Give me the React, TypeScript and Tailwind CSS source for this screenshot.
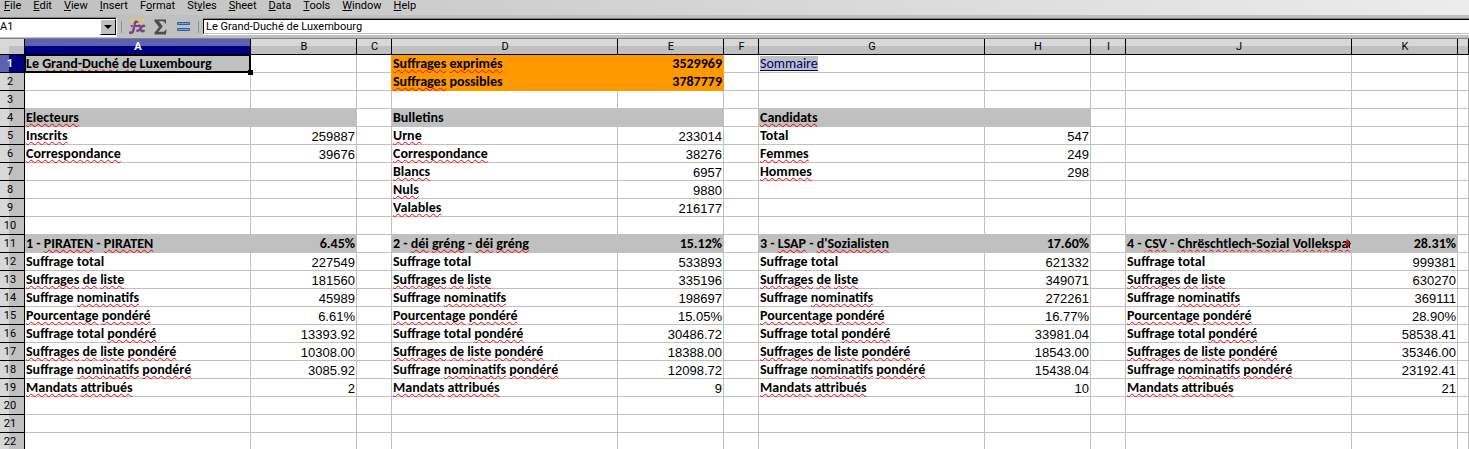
import type { ReactNode } from "react";

type Party = { name: string; share: string; values: string[] };

const COLUMNS = ["A", "B", "C", "D", "E", "F", "G", "H", "I", "J", "K", ""];
const ROW_COUNT = 22;

/* The letter between ampersands is the access key. */
const MENUS = ["&F&ile", "&E&dit", "&V&iew", "&I&nsert", "F&o&rmat", "St&y&les", "&S&heet", "&D&ata", "&T&ools", "&W&indow", "&H&elp"];

/* Words between underscores are marked by the spell checker. */
const LABELS = [
  "Suffrage total",
  "_Suffrages_ _de_ _liste_",
  "Suffrage _nominatifs_",
  "_Pourcentage_ _pondéré_",
  "Suffrage total _pondéré_",
  "_Suffrages_ _de_ _liste_ _pondéré_",
  "Suffrage _nominatifs_ _pondéré_",
  "_Mandats_ _attribués_",
];

const PARTIES: Record<string, Party> = {
  A: {
    name: "1 - _PIRATEN_ - _PIRATEN_",
    share: "6.45%",
    values: ["227549", "181560", "45989", "6.61%", "13393.92", "10308.00", "3085.92", "2"],
  },
  D: {
    name: "2 - _déi_ _gréng_ - _déi_ _gréng_",
    share: "15.12%",
    values: ["533893", "335196", "198697", "15.05%", "30486.72", "18388.00", "12098.72", "9"],
  },
  G: {
    name: "3 - _LSAP_ - _d'Sozialisten_",
    share: "17.60%",
    values: ["621332", "349071", "272261", "16.77%", "33981.04", "18543.00", "15438.04", "10"],
  },
  J: {
    name: "4 - _CSV_ - _Chrëschtlech-Sozial_ _Vollekspartei_",
    share: "28.31%",
    values: ["999381", "630270", "369111", "28.90%", "58538.41", "35346.00", "23192.41", "21"],
  },
};

const CELLS: Record<string, string> = {
  A1: "Le _Grand-Duché_ _de_ Luxembourg",
  D1: "_Suffrages_ _exprimés_",
  E1: "3529969",
  D2: "_Suffrages_ possibles",
  E2: "3787779",
  G1: "Sommaire",
  A4: "_Electeurs_",
  D4: "Bulletins",
  G4: "_Candidats_",
  A5: "_Inscrits_",
  B5: "259887",
  A6: "_Correspondance_",
  B6: "39676",
  D5: "_Urne_",
  E5: "233014",
  D6: "_Correspondance_",
  E6: "38276",
  D7: "_Blancs_",
  E7: "6957",
  D8: "_Nuls_",
  E8: "9880",
  D9: "_Valables_",
  E9: "216177",
  G5: "Total",
  H5: "547",
  G6: "_Femmes_",
  H6: "249",
  G7: "_Hommes_",
  H7: "298",
};

for (const [column, party] of Object.entries(PARTIES)) {
  const next = COLUMNS[COLUMNS.indexOf(column) + 1];
  CELLS[`${column}11`] = party.name;
  CELLS[`${next}11`] = party.share;
  LABELS.forEach((label, i) => {
    CELLS[`${column}${12 + i}`] = label;
    CELLS[`${next}${12 + i}`] = party.values[i];
  });
}

type Fill = "orange" | "gray" | "none";

function fillOf(column: string, row: number): Fill {
  if (column === "") return "none";
  if ("DE".includes(column) && row <= 2) return "orange";
  if (column === "A" && row === 1) return "gray";
  if (row === 4 && "ABDEGH".includes(column)) return "gray";
  if (row === 11 && "ABDEGHJK".includes(column)) return "gray";
  return "none";
}

function Marked({ text }: { text: string }) {
  return (
    <>
      {text.split("_").map((part, i): ReactNode =>
        i % 2 === 1 ? (
          <span
            key={i}
            className="underline decoration-[#ff0000] decoration-wavy decoration-1 underline-offset-1 [text-decoration-skip-ink:none]"
          >
            {part}
          </span>
        ) : (
          part
        ),
      )}
    </>
  );
}

function Cell({ column, row }: { column: string; row: number }) {
  const text = column ? CELLS[`${column}${row}`] : undefined;
  const fill = fillOf(column, row);
  const numeric = "BEHK".includes(column) && column !== "";
  const bold = !numeric || row <= 2 || row === 11;
  const selected = column === "A" && row === 1;
  const clipped = column === "J" && row === 11;
  const background = fill === "orange" ? "bg-[#ff9900]" : fill === "gray" ? "bg-[#c0c0c0]" : "bg-white";
  const rightEdge =
    fill === "orange" || (column === "C" && row <= 2) ? "border-r-[#ff9900]" : "border-r-[#c0c0c0]";
  const bottomEdge = fill === "orange" ? "border-b-[#ff9900]" : "border-b-[#c0c0c0]";
  const font = bold
    ? "font-['Carlito','Lato',sans-serif] text-[14px] font-bold"
    : "font-['Liberation_Sans',sans-serif] text-[13px] pt-px";
  return (
    <td
      className={`relative h-[18px] border-r border-b px-px align-top ${background} ${rightEdge} ${bottomEdge}`}
    >
      {text && (
        <div
          className={`h-[17px] leading-[17px] whitespace-nowrap ${clipped ? "overflow-hidden" : ""} ${font} ${numeric ? "text-right" : "text-left"}`}
        >
          {column === "G" && row === 1 ? (
            <div className="pt-px">
              <a href="#sommaire" className="block h-[15px] w-fit border-b border-[#000080] bg-[#c0c0c0] leading-[15px] font-normal text-[#000080]">
                {text}
              </a>
            </div>
          ) : (
            <Marked text={text} />
          )}
        </div>
      )}
      {clipped && (
        <svg className="absolute top-1 right-0" width="5" height="9" viewBox="0 0 5 9" aria-hidden="true">
          <path d="M0 1v7l4-3.5z" fill="#e00000" />
          <path d="M1 0.5l3.5 4-3.5 4" fill="none" stroke="#000" />
        </svg>
      )}
      {selected && (
        <>
          <div className="absolute top-0 -right-px -bottom-px left-0 border-t border-r-2 border-b-2 border-l border-black" />
          <div className="absolute -right-[3px] -bottom-[3px] z-10 size-[5px] bg-black" />
        </>
      )}
    </td>
  );
}

function MenuBar() {
  return (
    <nav
      aria-label="Main menu"
      className="flex h-[15px] shrink-0 items-start gap-3 bg-linear-to-r from-[#c0c0c0] to-[#ececec] pl-1 text-[11px] leading-[11px]"
    >
      {MENUS.map((menu) => {
        const [before, key, after] = menu.split("&");
        return (
          <button key={menu} type="button" className="whitespace-nowrap">
            {before}
            <span className="underline underline-offset-1 [text-decoration-skip-ink:none]">{key}</span>
            {after}
          </button>
        );
      })}
    </nav>
  );
}

function FormulaBar() {
  return (
    <div className="flex h-[23px] shrink-0 items-center bg-[#c0c0c0] text-[11px]">
      <div className="h-5 w-[117px] border-t border-r border-b-2 border-t-[#808080] border-r-white border-b-white">
        <div className="flex border-t border-black">
          <input
            aria-label="Name box"
            defaultValue="A1"
            className="h-4 min-w-0 flex-1 bg-white leading-4 outline-none"
          />
          <button
            type="button"
            aria-label="Open name list"
            className="flex h-4 w-4 items-center justify-center border border-t-white border-r-black border-b-black border-l-white bg-[#c0c0c0]"
          >
            <svg width="8" height="4" viewBox="0 0 8 4" aria-hidden="true">
              <path d="M0 0h8L4 4z" fill="#000" />
            </svg>
          </button>
        </div>
      </div>
      <div className="ml-1 h-3 w-px bg-[#909090]" />
      <button type="button" aria-label="Function wizard" className="ml-[7px]">
        <svg width="17" height="17" viewBox="0 0 17 17" aria-hidden="true">
          <g fill="none" stroke="#784381" strokeLinecap="round">
            <path d="M1 14.6c2.300.8 3-.7 3.500-3.200L5.700 5.800C6.100 3.800 7 3.200 8.500 3.700" strokeWidth="2.400" />
            <path d="M2.500 8h5.500" strokeWidth="2" />
            <path d="M9 7.800c1.800-.6 2.200.3 2.600 2l.6 2.200c.4 1.600 1.200 1.800 2.600.8M15.200 7.800c-1.800-.5-2.700 1-3.600 2.600s-1.800 2.800-3.400 2.300" strokeWidth="2.300" />
          </g>
          <path d="M2.500 12.500L4.700 6" stroke="#c49acb" strokeWidth=".8" fill="none" />
          <g fill="#fcd116">
            <path d="M3 1l.7 1.300L5 3l-1.300.7L3 5l-.7-1.300L1 3l1.300-.7zM9 0l.7 1.500 1.300.5-1.300.7L9 4l-.7-1.300L7 2l1.300-.5zM14 0l.8 1.700 1.700.5-1.700.8L14 5l-.8-2-1.700-.8 1.700-.5z" />
          </g>
        </svg>
      </button>
      <button type="button" aria-label="Select function" className="ml-2">
        <svg width="13" height="16" viewBox="0 0 13 16" aria-hidden="true">
          <path
            d="M.5.500h11.500v4h-1c-.3-1.600-1-2.200-2.500-2.200H4.800L8.800 7.500 4.300 12.700h4.700c1.500 0 2.300-.7 2.700-2.200h.8L12 15.500H.5V13.600L5 8.200.5 2.300z"
            fill="#4c4c4c"
          />
        </svg>
      </button>
      <button type="button" aria-label="Formula" className="ml-[10px]">
        <svg width="13" height="9" viewBox="0 0 13 9" aria-hidden="true">
          <path d="M.5.500h12v2H.5zM.5 6.500h12v2H.5z" fill="#6f9fd8" stroke="#2f62a3" />
        </svg>
      </button>
      <div className="ml-2 h-3 w-px bg-[#909090]" />
      <div className="ml-1 flex h-[17px] min-w-0 flex-1 border-t border-b border-t-[#808080] border-b-white">
        <input
          aria-label="Formula input"
          defaultValue="Le Grand-Duché de Luxembourg"
          className="min-w-0 flex-1 border-t border-b border-l border-t-black border-b-[#c0c0c0] border-l-black bg-white pl-[2px] leading-[13px] outline-none"
        />
      </div>
    </div>
  );
}

function Sheet() {
  return (
    <table className="w-full table-fixed border-separate border-spacing-0">
      <colgroup>
        <col className="w-[25px]" />
        {COLUMNS.map((column, i) => (
          <col
            key={i}
            className={column === "" ? "" : i % 3 === 0 ? "w-[226px]" : i % 3 === 1 ? "w-[106px]" : "w-[35px]"}
          />
        ))}
      </colgroup>
      <thead>
        <tr className="text-[11px]">
          <td className="h-4 border-r border-b border-black bg-[#d8d8d8] p-0">
            <div className="mt-[7px] ml-[9px] h-2 bg-[#c0c0c0]" />
          </td>
          {COLUMNS.map((column, i) => (
            <th
              key={i}
              scope="col"
              className={`h-4 border-r border-b border-black py-0 pr-0 pl-px leading-[15px] ${
                column === "A"
                  ? "bg-[linear-gradient(#6060b0_7px,#000080_7px)] font-bold text-white"
                  : "bg-[linear-gradient(#d8d8d8_7px,#c0c0c0_7px)] font-normal"
              }`}
            >
              {column}
            </th>
          ))}
        </tr>
      </thead>
      <tbody>
        {Array.from({ length: ROW_COUNT }, (_, i) => i + 1).map((row) => (
          <tr key={row}>
            <th
              scope="row"
              className={`h-[18px] border-r border-b border-black py-0 pr-1 pl-0 text-center text-[11px] leading-[17px] ${
                row === 1
                  ? "bg-[linear-gradient(to_right,#6060b0_9px,#000080_9px)] font-bold text-white"
                  : "bg-[linear-gradient(to_right,#d8d8d8_9px,#c0c0c0_9px)] font-normal"
              }`}
            >
              {row}
            </th>
            {COLUMNS.map((column, i) => (
              <Cell key={i} column={column} row={row} />
            ))}
          </tr>
        ))}
      </tbody>
    </table>
  );
}

export default function App() {
  return (
    <div className="flex h-screen flex-col overflow-hidden bg-white font-['Roboto',sans-serif] text-black">
      <MenuBar />
      <FormulaBar />
      <main className="min-h-0 flex-1 overflow-hidden border-t border-[#808080]">
        <Sheet />
      </main>
    </div>
  );
}
